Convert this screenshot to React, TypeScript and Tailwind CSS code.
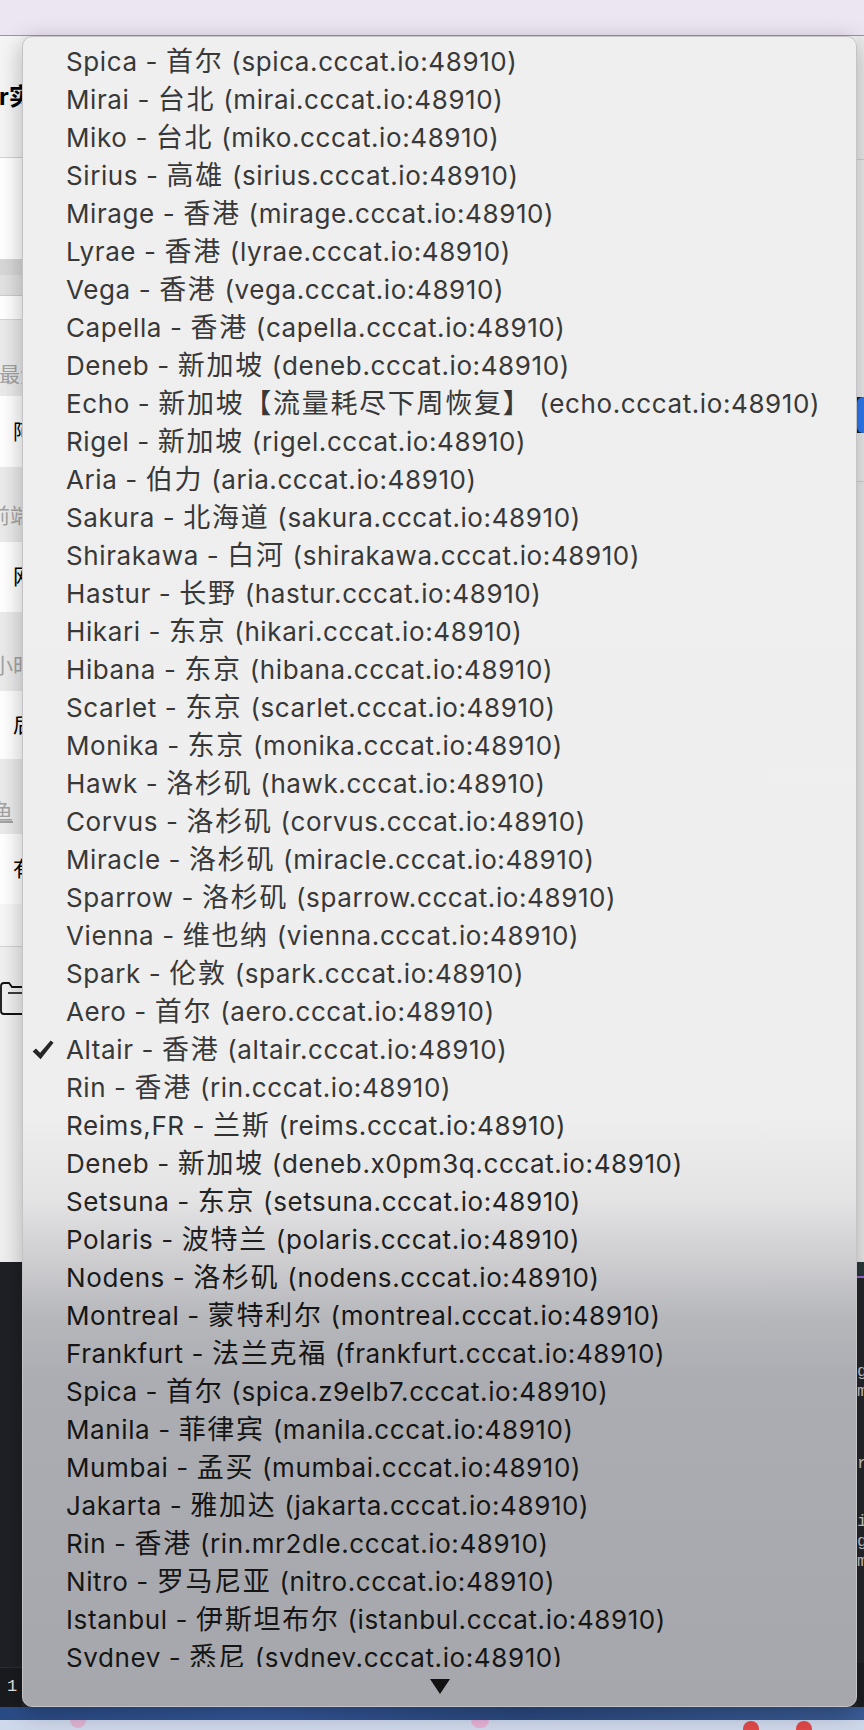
import React from 'react';

type Server = { name: string; city: string; host: string };

const servers: Server[] = [
  { name: 'Spica', city: '首尔', host: 'spica.cccat.io:48910' },
  { name: 'Mirai', city: '台北', host: 'mirai.cccat.io:48910' },
  { name: 'Miko', city: '台北', host: 'miko.cccat.io:48910' },
  { name: 'Sirius', city: '高雄', host: 'sirius.cccat.io:48910' },
  { name: 'Mirage', city: '香港', host: 'mirage.cccat.io:48910' },
  { name: 'Lyrae', city: '香港', host: 'lyrae.cccat.io:48910' },
  { name: 'Vega', city: '香港', host: 'vega.cccat.io:48910' },
  { name: 'Capella', city: '香港', host: 'capella.cccat.io:48910' },
  { name: 'Deneb', city: '新加坡', host: 'deneb.cccat.io:48910' },
  { name: 'Echo', city: '新加坡【流量耗尽下周恢复】', host: 'echo.cccat.io:48910' },
  { name: 'Rigel', city: '新加坡', host: 'rigel.cccat.io:48910' },
  { name: 'Aria', city: '伯力', host: 'aria.cccat.io:48910' },
  { name: 'Sakura', city: '北海道', host: 'sakura.cccat.io:48910' },
  { name: 'Shirakawa', city: '白河', host: 'shirakawa.cccat.io:48910' },
  { name: 'Hastur', city: '长野', host: 'hastur.cccat.io:48910' },
  { name: 'Hikari', city: '东京', host: 'hikari.cccat.io:48910' },
  { name: 'Hibana', city: '东京', host: 'hibana.cccat.io:48910' },
  { name: 'Scarlet', city: '东京', host: 'scarlet.cccat.io:48910' },
  { name: 'Monika', city: '东京', host: 'monika.cccat.io:48910' },
  { name: 'Hawk', city: '洛杉矶', host: 'hawk.cccat.io:48910' },
  { name: 'Corvus', city: '洛杉矶', host: 'corvus.cccat.io:48910' },
  { name: 'Miracle', city: '洛杉矶', host: 'miracle.cccat.io:48910' },
  { name: 'Sparrow', city: '洛杉矶', host: 'sparrow.cccat.io:48910' },
  { name: 'Vienna', city: '维也纳', host: 'vienna.cccat.io:48910' },
  { name: 'Spark', city: '伦敦', host: 'spark.cccat.io:48910' },
  { name: 'Aero', city: '首尔', host: 'aero.cccat.io:48910' },
  { name: 'Altair', city: '香港', host: 'altair.cccat.io:48910' },
  { name: 'Rin', city: '香港', host: 'rin.cccat.io:48910' },
  { name: 'Reims,FR', city: '兰斯', host: 'reims.cccat.io:48910' },
  { name: 'Deneb', city: '新加坡', host: 'deneb.x0pm3q.cccat.io:48910' },
  { name: 'Setsuna', city: '东京', host: 'setsuna.cccat.io:48910' },
  { name: 'Polaris', city: '波特兰', host: 'polaris.cccat.io:48910' },
  { name: 'Nodens', city: '洛杉矶', host: 'nodens.cccat.io:48910' },
  { name: 'Montreal', city: '蒙特利尔', host: 'montreal.cccat.io:48910' },
  { name: 'Frankfurt', city: '法兰克福', host: 'frankfurt.cccat.io:48910' },
  { name: 'Spica', city: '首尔', host: 'spica.z9elb7.cccat.io:48910' },
  { name: 'Manila', city: '菲律宾', host: 'manila.cccat.io:48910' },
  { name: 'Mumbai', city: '孟买', host: 'mumbai.cccat.io:48910' },
  { name: 'Jakarta', city: '雅加达', host: 'jakarta.cccat.io:48910' },
  { name: 'Rin', city: '香港', host: 'rin.mr2dle.cccat.io:48910' },
  { name: 'Nitro', city: '罗马尼亚', host: 'nitro.cccat.io:48910' },
  { name: 'Istanbul', city: '伊斯坦布尔', host: 'istanbul.cccat.io:48910' },
  { name: 'Sydney', city: '悉尼', host: 'sydney.cccat.io:48910' },
];

const SELECTED = 26;

// menu is translucent, so text gets darker where the dark window shows through
function textColor(i: number) {
  if (i <= 27) return 'text-[#383838]';
  if (i === 28) return 'text-[#323232]';
  if (i === 29) return 'text-[#2b2b2b]';
  if (i === 30) return 'text-[#242424]';
  if (i === 31) return 'text-[#1e1e1e]';
  if (i === 32) return 'text-[#191919]';
  return 'text-[#151515]';
}

function Check() {
  return (
    <svg width="22" height="20" viewBox="0 0 20 18">
      <path d="M0.6 10.4 L3.6 7.6 L7.4 11.4 L17 0.4 L19.6 2.4 L7.8 17.4 Z" fill="#262626" />
    </svg>
  );
}

function Menu() {
  return (
    <div className="absolute left-[22px] top-[36px] w-[835px] h-[1671px] rounded-[10px] border border-[#c4c4c6] shadow-[0_6px_24px_rgba(0,0,0,0.28)] bg-[linear-gradient(to_bottom,#efefef_0%,#eeeeee_64.5%,#e4e4e5_69.5%,#cdcdd0_73.4%,#b6b7bb_76.8%,#acadb2_80.4%,#a6a7ac_100%)] flex flex-col pt-[6px] overflow-hidden">
      <div className="h-[1625px] overflow-hidden flex flex-col">
        {servers.map((s, i) => (
          <div key={i} className={`h-[38px] shrink-0 flex items-center pl-[9px] text-[26px] leading-[38px] whitespace-nowrap ${textColor(i)}`}>
            <span className="w-[34px] flex items-center">{i === SELECTED && <Check />}</span>
            <span>
              <span className="tracking-[0.6px]">{s.name} - </span>
              <span className="text-[27px] tracking-[1.7px]">{s.city}</span>
              <span className="tracking-[0.6px]"> ({s.host})</span>
            </span>
          </div>
        ))}
      </div>
      <div className="h-[39px] flex items-center justify-center">
        <svg width="20" height="15" viewBox="0 0 20 15">
          <polygon points="0,0 20,0 10,15" fill="#111" />
        </svg>
      </div>
    </div>
  );
}

function LeftStrip() {
  return (
    <div className="w-[22px] flex flex-col overflow-hidden">
      <div className="h-[122px] bg-[#f5f5f5] border-b border-[#d2d2d2] pt-[47px]">
        <div className="text-[24px] leading-[28px] font-bold text-black whitespace-nowrap -ml-[1px]">r实</div>
      </div>
      <div className="h-[101px] bg-white" />
      <div className="h-[16px] bg-[#d8d8d8]" />
      <div className="h-[21px] bg-[#e2e2e2] border-b border-[#cdcdcd]" />
      <div className="h-[24px] bg-white border-b border-[#d6d6d6]" />
      <div className="h-[76px] bg-[#ebebeb] flex items-end pb-[9px]">
        <span className="text-[21px] leading-[24px] text-[#a3a3a3] whitespace-nowrap -ml-[1px]">最大</span>
      </div>
      <div className="h-[71px] bg-white flex items-center pl-[13px]">
        <span className="text-[21px] text-black">阿</span>
      </div>
      <div className="h-[75px] bg-[#ebebeb] flex items-end pb-[14px]">
        <span className="text-[21px] leading-[24px] text-[#a3a3a3] whitespace-nowrap -ml-[11px]">前端</span>
      </div>
      <div className="h-[70px] bg-white flex items-center pl-[13px]">
        <span className="text-[21px] text-black">网</span>
      </div>
      <div className="h-[79px] bg-[#ebebeb] flex items-end pb-[13px]">
        <span className="text-[21px] leading-[24px] text-[#a3a3a3] whitespace-nowrap -ml-[8px]">小时</span>
      </div>
      <div className="h-[68px] bg-white flex items-center pl-[13px]">
        <span className="text-[21px] text-black">后</span>
      </div>
      <div className="h-[75px] bg-[#ebebeb] flex items-end pb-[10px]">
        <span className="text-[21px] leading-[24px] text-[#a3a3a3] underline whitespace-nowrap -ml-[8px]">鱼</span>
      </div>
      <div className="h-[70px] bg-white flex items-center pl-[13px]">
        <span className="text-[21px] text-black">有</span>
      </div>
      <div className="h-[43px] bg-[#f7f7f7] border-b border-[#d4d4d4]" />
      <div className="flex-1 bg-[#f0f0f0] pt-[34px]">
        <svg width="22" height="34" viewBox="0 0 22 34">
          <path d="M23 6 H12 L9 2 H4 Q1 2 1 5 V30 Q1 33 4 33 H23" fill="none" stroke="#111" strokeWidth="1.8" />
          <path d="M8 12 H23" stroke="#111" strokeWidth="1.6" />
        </svg>
      </div>
    </div>
  );
}

function RightStrip() {
  return (
    <div className="w-[7px] flex flex-col overflow-hidden">
      <div className="h-[124px] bg-[#ececec] border-b border-[#d0d0d0]" />
      <div className="h-[237px] bg-[#eeeeee]" />
      <div className="h-[36px] bg-[#2f7bf5] rounded-l-[6px]" />
      <div className="h-[49px] bg-[#ececec] border-b border-[#d0d0d0]" />
      <div className="flex-1 bg-[#ebebeb]" />
    </div>
  );
}

export default function App() {
  return (
    <div className="w-[864px] h-[1730px] relative overflow-hidden flex flex-col bg-[#1e1f24] font-['Inter','Noto_Sans_CJK_SC',sans-serif]">
      {/* title bar */}
      <div className="h-[36px] bg-[#ece5f2] border-b border-[#9f90b2] shrink-0" />

      {/* window behind the menu */}
      <div className="h-[1226px] flex shrink-0">
        <LeftStrip />
        <div className="flex-1 bg-[#f2f2f2]" />
        <RightStrip />
      </div>

      {/* dark editor area */}
      <div className="h-[445px] flex shrink-0">
        <div className="w-[22px] flex flex-col">
          <div className="flex-1 bg-[#1f2025]" />
          <div className="h-[40px] bg-[#1a1b1f] border-t border-[#2c2d33] flex items-center pl-[7px] pb-[2px]">
            <span className="text-[17px] text-[#e6e6e6] font-['Liberation_Mono',monospace]">1</span>
          </div>
        </div>
        <div className="flex-1 bg-[#26272c]" />
        <div className="w-[7px] flex flex-col bg-[#25262b] font-['Liberation_Mono',monospace] text-[17px] text-[#c9c9c9] leading-[20px] overflow-hidden">
          <div className="h-[14px] bg-[#2b3a3c] text-[#56c1c8]" />
          <div className="h-[2px] bg-[#9b6fe0]" />
          <div className="h-[84px]" />
          <div className="whitespace-nowrap">g</div>
          <div className="whitespace-nowrap">m</div>
          <div className="h-[52px]" />
          <div className="whitespace-nowrap">r</div>
          <div className="h-[38px]" />
          <div className="whitespace-nowrap">i</div>
          <div className="whitespace-nowrap">g</div>
          <div className="whitespace-nowrap">m</div>
          <div className="flex-1" />
          <div className="h-[44px] bg-[#1d1e22]" />
        </div>
      </div>

      {/* desktop wallpaper peeking out */}
      <div className="h-[13px] shrink-0 bg-[linear-gradient(90deg,#2a4c86,#34579a_30%,#2b4a82_60%,#3a5c96)]" />
      <div className="flex-1 bg-[#cfd9ec] flex items-start">
        <div className="ml-[70px] w-[16px] h-[8px] rounded-b-full bg-[#e0b4d4]" />
        <div className="ml-[385px] w-[18px] h-[8px] rounded-b-full bg-[#e6b0d6]" />
        <div className="ml-[254px] w-[16px] h-[10px] rounded-t-full bg-[#e04848] mt-[1px]" />
        <div className="ml-[37px] w-[16px] h-[10px] rounded-t-full bg-[#e04848] mt-[1px]" />
      </div>

      <Menu />
    </div>
  );
}
